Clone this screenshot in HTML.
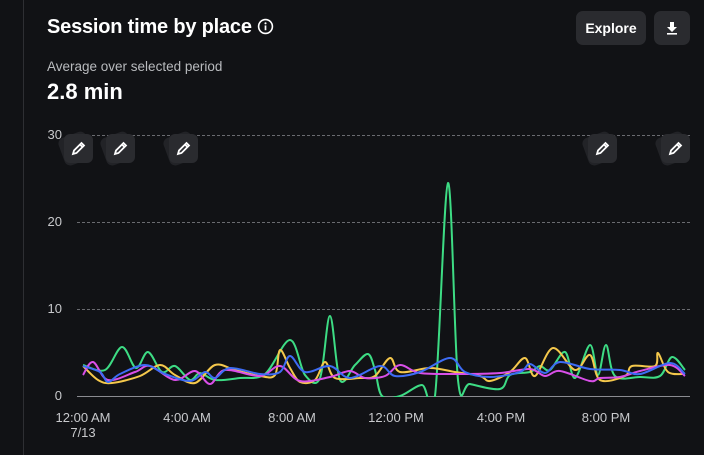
<!DOCTYPE html>
<html><head><meta charset="utf-8"><style>
*{margin:0;padding:0;box-sizing:border-box}
body{width:704px;height:455px;background:#111215;font-family:"Liberation Sans",sans-serif;color:#fff;position:relative;overflow:hidden}
.vl{position:absolute;left:23px;top:0;width:1px;height:455px;background:#2e2f33}
h1{position:absolute;left:47px;top:16px;font-size:20px;font-weight:700;letter-spacing:-0.2px}
.sub{position:absolute;left:47px;top:59px;font-size:13.5px;color:#b9bbbe}
.val{position:absolute;left:47px;top:79px;font-size:22px;font-weight:700}
.btn{position:absolute;top:11px;height:34px;background:#2a2b2f;border-radius:7px;font-weight:700;font-size:14px;display:flex;align-items:center;justify-content:center}
.yl{position:absolute;font-size:13px;color:#c8c9cc;text-align:right;width:20px}
.xl{position:absolute;font-size:13px;color:#c8c9cc;text-align:center;width:80px;line-height:15px}
.pen{position:absolute;top:134px;width:29px;height:29px}
.pen .b{position:absolute;inset:0;background:#2a2b2f;border-radius:6px}
.pen .s{position:absolute;inset:0;background:#222327;border-radius:6px;transform:rotate(-20deg) translate(-3px,-1px)}
.pen svg{position:absolute;left:7px;top:7px}
</style></head><body>
<div class="vl"></div>
<h1>Session time by place <svg width="17" height="17" viewBox="0 0 16 16" style="vertical-align:-2px"><circle cx="8" cy="8" r="6.5" fill="none" stroke="#fff" stroke-width="1.5"/><rect x="7.2" y="7" width="1.6" height="4.5" fill="#fff"/><circle cx="8" cy="5" r="1" fill="#fff"/></svg></h1>
<div class="sub">Average over selected period</div>
<div class="val">2.8 min</div>
<div class="btn" style="left:576px;width:70px">Explore</div>
<div class="btn" style="left:654px;width:36px"><svg width="12" height="14" viewBox="0 0 12 14"><path d="M4 1h4v5h3L6 11 1 6h3z" fill="#fff"/><rect x="1" y="12" width="10" height="1.6" fill="#fff"/></svg></div>
<div class="yl" style="left:42px;top:127px">30</div>
<div class="yl" style="left:42px;top:214px">20</div>
<div class="yl" style="left:42px;top:301px">10</div>
<div class="yl" style="left:42px;top:388px">0</div>
<svg style="position:absolute;left:0;top:0" width="704" height="455">
<defs><clipPath id="cp"><rect x="0" y="0" width="704" height="397"/></clipPath></defs>
<g stroke="#6a6b70" stroke-dasharray="3,2" stroke-width="1"><line x1="77" y1="135.5" x2="690" y2="135.5"/><line x1="77" y1="222.5" x2="690" y2="222.5"/><line x1="77" y1="309.5" x2="690" y2="309.5"/></g>
<line x1="77" y1="396.5" x2="690" y2="396.5" stroke="#8a8b90"/>
<g id="lines" fill="none" stroke-width="2" stroke-linejoin="round" clip-path="url(#cp)"></g>
</svg>
<div class="xl" style="left:43px;top:410px">12:00 AM<br>7/13</div>
<div class="xl" style="left:147px;top:410px">4:00 AM</div>
<div class="xl" style="left:252px;top:410px">8:00 AM</div>
<div class="xl" style="left:356px;top:410px">12:00 PM</div>
<div class="xl" style="left:461px;top:410px">4:00 PM</div>
<div class="xl" style="left:566px;top:410px">8:00 PM</div>
<div class="pen" style="left:64px"><div class="s"></div><div class="b"></div><svg width="15" height="15" viewBox="0 0 15 15"><path d="M2 13l1-3.5L10.5 2l2.5 2.5L5.5 12z M9 3.5l2.5 2.5" fill="none" stroke="#fff" stroke-width="1.8"/></svg></div>
<div class="pen" style="left:106px"><div class="s"></div><div class="b"></div><svg width="15" height="15" viewBox="0 0 15 15"><path d="M2 13l1-3.5L10.5 2l2.5 2.5L5.5 12z M9 3.5l2.5 2.5" fill="none" stroke="#fff" stroke-width="1.8"/></svg></div>
<div class="pen" style="left:169px"><div class="s"></div><div class="b"></div><svg width="15" height="15" viewBox="0 0 15 15"><path d="M2 13l1-3.5L10.5 2l2.5 2.5L5.5 12z M9 3.5l2.5 2.5" fill="none" stroke="#fff" stroke-width="1.8"/></svg></div>
<div class="pen" style="left:588px"><div class="s"></div><div class="b"></div><svg width="15" height="15" viewBox="0 0 15 15"><path d="M2 13l1-3.5L10.5 2l2.5 2.5L5.5 12z M9 3.5l2.5 2.5" fill="none" stroke="#fff" stroke-width="1.8"/></svg></div>
<div class="pen" style="left:661px"><div class="s"></div><div class="b"></div><svg width="15" height="15" viewBox="0 0 15 15"><path d="M2 13l1-3.5L10.5 2l2.5 2.5L5.5 12z M9 3.5l2.5 2.5" fill="none" stroke="#fff" stroke-width="1.8"/></svg></div>
<script>
var data={
"#3ddc84":[[83,365],[105,370],[122,347],[136,368],[148,352],[162,372],[175,366],[190,380],[200,373],[215,380],[240,378],[265,374],[290,340],[305,375],[320,378],[330,316],[340,380],[355,365],[368,354],[375,370],[382,396],[400,396],[422,385],[435,396],[448,183],[458,380],[470,384],[500,389],[510,375],[530,372],[540,366],[550,370],[565,352],[575,378],[590,345],[598,375],[606,345],[615,376],[640,377],[660,376],[672,357],[685,370]],
"#f5c84c":[[83,366],[98,380],[112,383],[140,376],[160,365],[175,375],[195,383],[215,365],[235,370],[260,376],[275,375],[280,350],[290,368],[300,382],[315,380],[325,362],[335,378],[360,378],[375,376],[390,358],[400,372],[430,368],[455,372],[480,376],[490,381],[510,372],[525,358],[535,376],[553,348],[575,370],[590,355],[600,380],[625,376],[632,366],[655,366],[658,353],[668,372],[685,374]],
"#d94fe8":[[83,375],[93,362],[108,380],[135,372],[150,366],[175,380],[195,371],[210,384],[225,370],[260,376],[280,366],[300,381],[330,377],[350,371],[365,378],[385,376],[400,365],[420,373],[460,374],[500,373],[530,369],[545,376],[560,371],[590,381],[600,378],[620,377],[640,371],[670,365],[685,376]],
"#3d6cf5":[[83,366],[100,372],[108,382],[120,374],[145,365],[165,374],[190,381],[205,372],[215,378],[230,368],[260,374],[280,372],[290,356],[305,372],[330,366],[350,378],[380,366],[395,376],[420,372],[450,358],[465,372],[490,377],[520,372],[530,364],[545,373],[560,362],[590,369],[620,370],[640,374],[670,363],[685,374]]};
var g=document.getElementById('lines'),ns='http://www.w3.org/2000/svg';
for(var c in data){var p=data[c],d='M'+p[0][0]+','+p[0][1];
for(var i=0;i<p.length-1;i++){var a=p[i-1]||p[i],b=p[i],e=p[i+1],f=p[i+2]||e;
d+=' C'+(b[0]+(e[0]-a[0])/6)+','+(b[1]+(e[1]-a[1])/6)+' '+(e[0]-(f[0]-b[0])/6)+','+(e[1]-(f[1]-b[1])/6)+' '+e[0]+','+e[1];}
var el=document.createElementNS(ns,'path');el.setAttribute('d',d);el.setAttribute('stroke',c);g.appendChild(el);}
</script>
</body></html>
